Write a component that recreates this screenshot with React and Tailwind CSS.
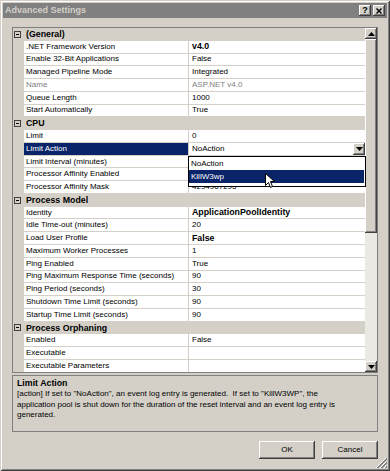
import React from "react";

const sections = [
  {
    title: "(General)",
    rows: [
      { name: ".NET Framework Version", value: "v4.0", bold: true },
      { name: "Enable 32-Bit Applications", value: "False" },
      { name: "Managed Pipeline Mode", value: "Integrated" },
      { name: "Name", value: "ASP.NET v4.0", disabled: true },
      { name: "Queue Length", value: "1000" },
      { name: "Start Automatically", value: "True" },
    ],
  },
  {
    title: "CPU",
    rows: [
      { name: "Limit", value: "0" },
      { name: "Limit Action", value: "NoAction", selected: true },
      { name: "Limit Interval (minutes)", value: "" },
      { name: "Processor Affinity Enabled", value: "" },
      { name: "Processor Affinity Mask", value: "4294967295" },
    ],
  },
  {
    title: "Process Model",
    rows: [
      { name: "Identity", value: "ApplicationPoolIdentity", bold: true },
      { name: "Idle Time-out (minutes)", value: "20" },
      { name: "Load User Profile", value: "False", bold: true },
      { name: "Maximum Worker Processes", value: "1" },
      { name: "Ping Enabled", value: "True" },
      { name: "Ping Maximum Response Time (seconds)", value: "90" },
      { name: "Ping Period (seconds)", value: "30" },
      { name: "Shutdown Time Limit (seconds)", value: "90" },
      { name: "Startup Time Limit (seconds)", value: "90" },
    ],
  },
  {
    title: "Process Orphaning",
    rows: [
      { name: "Enabled", value: "False" },
      { name: "Executable", value: "" },
      { name: "Executable Parameters", value: "" },
    ],
  },
];

const bevel =
  "bg-[#d4d0c8] shadow-[inset_-1px_-1px_0_#404040,inset_1px_1px_0_#ffffff,inset_-2px_-2px_0_#808080,inset_2px_2px_0_#d4d0c8]";

function Arrow({ up }) {
  return (
    <svg width="7" height="4" viewBox="0 0 7 4">
      {up ? <path d="M0 4 L3.5 0 L7 4 Z" fill="#000" /> : <path d="M0 0 L3.5 4 L7 0 Z" fill="#000" />}
    </svg>
  );
}

function CategoryRow({ title }) {
  return (
    <div className="flex h-[12.78px] shrink-0 items-center bg-[#d4d0c8]">
      <div className="ml-[1px] flex h-[7px] w-[7px] shrink-0 items-center justify-center border border-[#404040]">
        <div className="h-px w-[3px] bg-black" />
      </div>
      <div className="ml-[5px] whitespace-nowrap text-[8.8px] font-bold leading-none">{title}</div>
    </div>
  );
}

function PropRow({ row }) {
  const { name, value, bold, disabled, selected } = row;
  return (
    <div className="flex h-[12.78px] shrink-0 bg-[#d4d0c8]">
      <div className="w-[11px] shrink-0" />
      <div
        className={`mb-px flex w-[164px] shrink-0 items-center overflow-hidden whitespace-nowrap pl-[2px] leading-none ${
          selected ? "bg-[#0a246a] text-white" : "bg-white"
        } ${disabled ? "text-[#808080]" : ""}`}
      >
        {name}
      </div>
      <div className="w-px shrink-0" />
      <div
        className={`mb-px flex min-w-0 flex-1 items-center overflow-hidden whitespace-nowrap bg-white pl-[3px] leading-none ${
          disabled ? "text-[#808080]" : ""
        } ${bold ? "text-[8.8px] font-bold" : ""}`}
      >
        <span className="flex-1">{value}</span>
        {selected && (
          <div className={`flex h-full w-[12px] shrink-0 items-center justify-center ${bevel}`}>
            <Arrow />
          </div>
        )}
      </div>
    </div>
  );
}

export default function App() {
  return (
    <div className="relative flex h-[471px] w-[390px] flex-col overflow-hidden bg-[#d4d0c8] font-['Liberation_Sans',Arial,sans-serif] text-[8px] text-black shadow-[inset_1px_1px_0_#d4d0c8,inset_-1px_-1px_0_#404040,inset_2px_2px_0_#ffffff,inset_-2px_-2px_0_#808080]">
      {/* Title bar */}
      <div className="mx-[3px] mt-[3px] flex h-[15px] shrink-0 items-center justify-between bg-[#808080] pl-[2px] pr-[2px]">
        <span className="text-[9px] font-bold leading-none text-[#d4d0c8]">Advanced Settings</span>
        <div className="flex gap-[2px]">
          <div className={`flex h-[11px] w-[12px] items-center justify-center text-[9px] font-bold leading-none ${bevel}`}>?</div>
          <div className={`flex h-[11px] w-[12px] items-center justify-center ${bevel}`}>
            <svg width="6" height="6" viewBox="0 0 6 6">
              <path d="M0.5 0.5 L5.5 5.5 M5.5 0.5 L0.5 5.5" stroke="#000" strokeWidth="1.4" />
            </svg>
          </div>
        </div>
      </div>

      {/* Property grid */}
      <div className="ml-[12px] mt-[9px] flex h-[346px] w-[366px] shrink-0 overflow-hidden border border-[#808080] bg-[#d4d0c8]">
        <div className="flex min-w-0 flex-1 flex-col overflow-hidden">
          {sections.map((s) => (
            <React.Fragment key={s.title}>
              <CategoryRow title={s.title} />
              {s.rows.map((r) => (
                <PropRow key={r.name} row={r} />
              ))}
            </React.Fragment>
          ))}
        </div>
        {/* Scrollbar */}
        <div className="flex w-[12px] shrink-0 flex-col">
          <div className={`flex h-[11px] shrink-0 items-center justify-center ${bevel}`}>
            <Arrow up />
          </div>
          <div className={`h-[194px] shrink-0 ${bevel}`} />
          <div className="flex-1 bg-[#ebe9e4]" />
          <div className={`flex h-[11px] shrink-0 items-center justify-center ${bevel}`}>
            <Arrow />
          </div>
        </div>
      </div>

      {/* Description */}
      <div className="ml-[12px] mt-[2px] h-[57px] w-[366px] shrink-0 border border-[#808080] pl-[4px] pt-[2px]">
        <div className="text-[8.8px] font-bold leading-[11px]">Limit Action</div>
        <div className="whitespace-pre leading-[10.5px]">
          {'[action] If set to "NoAction", an event log entry is generated.  If set to "KillW3WP", the'}
          <br />
          {"application pool is shut down for the duration of the reset interval and an event log entry is"}
          <br />
          {"generated."}
        </div>
      </div>

      {/* Buttons */}
      <div className="mt-[9px] flex shrink-0 justify-end gap-[7px] pr-[12px]">
        <div className={`flex h-[18px] w-[56px] items-center justify-center leading-none ${bevel}`}>OK</div>
        <div className={`flex h-[18px] w-[56px] items-center justify-center leading-none ${bevel}`}>Cancel</div>
      </div>

      {/* Dropdown list overlay */}
      <div className="absolute left-[188px] top-[156px] flex h-[31px] w-[178px] flex-col border border-black bg-white pr-px">
        <div className="flex h-[13px] items-center pl-[2px] leading-none">NoAction</div>
        <div className="flex h-[13px] items-center bg-[#0a246a] pl-[2px] leading-none text-white">KillW3wp</div>
      </div>

      {/* Mouse cursor */}
      <svg className="absolute left-[265px] top-[173px]" width="11" height="16" viewBox="0 0 11 16">
        <path d="M0.5 0.5 L0.5 12.5 L3.5 9.5 L5.5 14.5 L7.5 13.5 L5.5 8.5 L9.5 8.5 Z" fill="#fff" stroke="#000" strokeWidth="1" />
      </svg>

      {/* Resize grip */}
      <svg className="absolute bottom-[2px] right-[2px]" width="12" height="12" viewBox="0 0 12 12">
        <path d="M11 1 L1 11 M11 5 L5 11 M11 9 L9 11" stroke="#808080" strokeWidth="1" />
        <path d="M11 2 L2 11 M11 6 L6 11 M11 10 L10 11" stroke="#808080" strokeWidth="1" />
        <path d="M10 1 L0 11 M10 5 L4 11 M10 9 L8 11" stroke="#ffffff" strokeWidth="1" />
      </svg>
    </div>
  );
}
